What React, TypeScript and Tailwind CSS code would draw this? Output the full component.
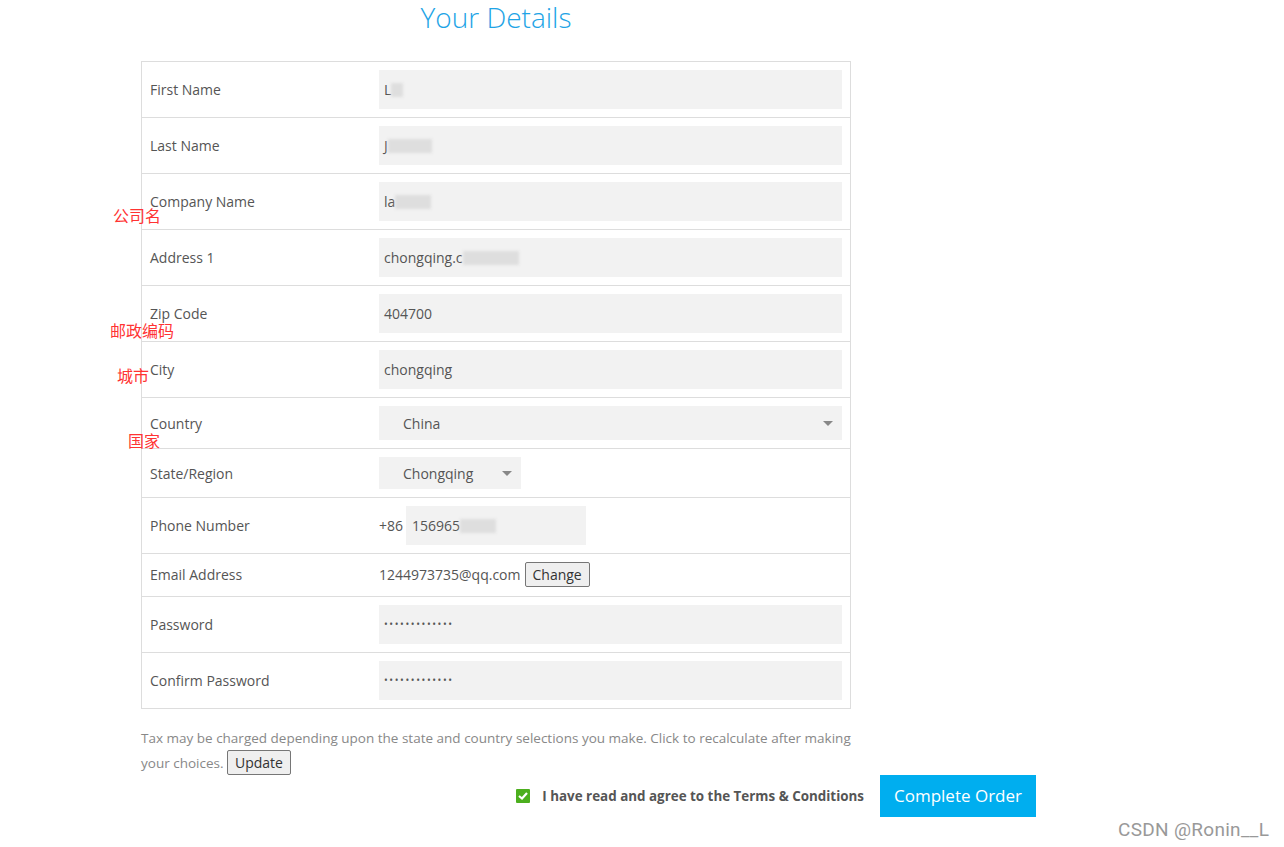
import React from 'react';

const font = { fontFamily: '"Open Sans", "Noto Sans", sans-serif' };

function Blur({ w }: { w: number }) {
  return <span className="inline-block h-[14px] bg-[#dedede] blur-[1.5px] align-middle" style={{ width: w }} />;
}

function TextInput({ children }: { children: React.ReactNode }) {
  return (
    <div className="flex h-[39px] w-full items-center bg-[#f2f2f2] px-[5px] text-[14px] text-[#555]">
      {children}
    </div>
  );
}

function Dots() {
  return (
    <TextInput>
      <span className="text-[10px] tracking-[1.6px] text-[#555]">•••••••••••••</span>
    </TextInput>
  );
}

function Arrow() {
  return (
    <svg width="10" height="5" viewBox="0 0 10 5">
      <path d="M0 0 L10 0 L5 5 Z" fill="#888" />
    </svg>
  );
}

function Row({ label, children, py = 'py-2' }: { label: string; children: React.ReactNode; py?: string }) {
  return (
    <div className={`flex items-center border-b border-[#dddddd] last:border-b-0 ${py}`}>
      <div className="w-[237px] shrink-0 pl-2 text-[14px] text-[#555]">{label}</div>
      <div className="flex flex-1 items-center pr-2">{children}</div>
    </div>
  );
}

function GrayButton({ children }: { children: React.ReactNode }) {
  return (
    <span className="inline-flex h-[25px] items-center rounded-[2px] border border-[#767676] bg-[#efefef] px-[7px] text-[14px] text-[#333]">
      {children}
    </span>
  );
}

export default function App() {
  const notes = [
    { text: '公司名', x: 113, y: 205 },
    { text: '邮政编码', x: 110, y: 320 },
    { text: '城市', x: 117, y: 365 },
    { text: '国家', x: 128, y: 430 },
  ];

  return (
    <div className="relative min-h-[847px] w-full bg-white" style={font}>
      <div className="pl-[141px]">
        <div className="w-[710px]">
          <h1 className="text-center text-[28px] font-light leading-[34px] text-[#1ea4e6]">Your Details</h1>
          <div className="mt-[27px] border border-[#dddddd]">
            <Row label="First Name">
              <TextInput>L<Blur w={12} /></TextInput>
            </Row>
            <Row label="Last Name">
              <TextInput>J<Blur w={44} /></TextInput>
            </Row>
            <Row label="Company Name">
              <TextInput>la<Blur w={36} /></TextInput>
            </Row>
            <Row label="Address 1">
              <TextInput>chongqing.c<Blur w={56} /></TextInput>
            </Row>
            <Row label="Zip Code">
              <TextInput>404700</TextInput>
            </Row>
            <Row label="City">
              <TextInput>chongqing</TextInput>
            </Row>
            <Row label="Country">
              <div className="flex h-[34px] w-full items-center justify-between bg-[#f2f2f2] pl-6 pr-[9px] text-[14px] text-[#555]">
                <span>China</span>
                <Arrow />
              </div>
            </Row>
            <Row label="State/Region">
              <div className="flex h-[32px] w-[142px] items-center justify-between bg-[#f2f2f2] pl-6 pr-[9px] text-[14px] text-[#555]">
                <span>Chongqing</span>
                <Arrow />
              </div>
            </Row>
            <Row label="Phone Number">
              <span className="mr-[3px] text-[14px] text-[#555]">+86</span>
              <div className="flex h-[39px] w-[180px] items-center bg-[#f2f2f2] px-[6px] text-[14px] text-[#555]">
                156965<Blur w={36} />
              </div>
            </Row>
            <Row label="Email Address" py="pt-2 pb-[9px]">
              <span className="mr-1 text-[14px] text-[#555]">1244973735@qq.com</span>
              <GrayButton>Change</GrayButton>
            </Row>
            <Row label="Password">
              <Dots />
            </Row>
            <Row label="Confirm Password">
              <Dots />
            </Row>
          </div>
          <p className="mt-[18px] text-[13.5px] leading-[23px] text-[#888]">
            Tax may be charged depending upon the state and country selections you make. Click to recalculate after making
            your choices. <GrayButton>Update</GrayButton>
          </p>
        </div>
        <div className="flex w-[895px] items-center justify-end">
          <span className="flex h-[14px] w-[14px] items-center justify-center rounded-[1px] bg-[#4caf1e]">
            <svg width="10" height="8" viewBox="0 0 10 8">
              <path d="M1 4 L4 6.5 L9 1" stroke="#fff" strokeWidth="2.2" fill="none" />
            </svg>
          </span>
          <span className="ml-3 text-[13.4px] font-bold text-[#555]">I have read and agree to the Terms &amp; Conditions</span>
          <span className="ml-4 flex h-[42px] w-[156px] items-center justify-center bg-[#00aeef] text-[17px] text-white">
            Complete Order
          </span>
        </div>
      </div>

      {notes.map((n) => (
        <span
          key={n.text}
          className="absolute text-[16px] leading-[20px] text-[#f33]"
          style={{ left: n.x, top: n.y, fontFamily: '"Noto Sans CJK SC", sans-serif' }}
        >
          {n.text}
        </span>
      ))}
      <span className="absolute left-[1118px] top-[816px] text-[19px] tracking-[0.3px] text-[#999]" style={{ fontFamily: 'Roboto, sans-serif' }}>
        CSDN @Ronin__L
      </span>
    </div>
  );
}
